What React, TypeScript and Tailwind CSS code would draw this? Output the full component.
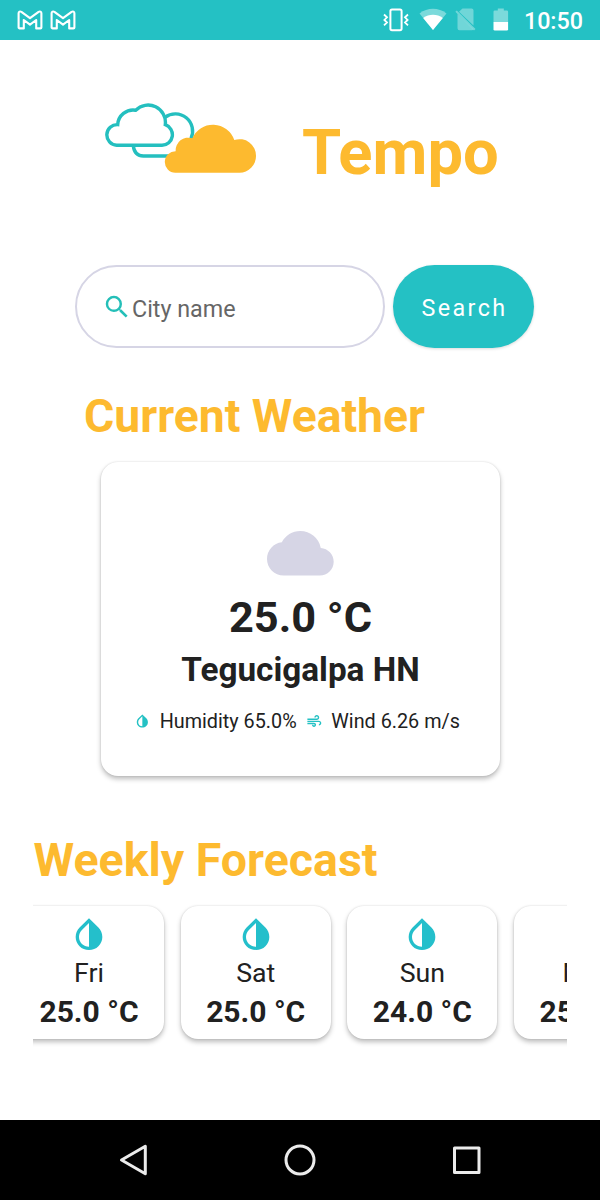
import type { ReactNode } from "react";
import { MdAir, MdCloud, MdInvertColors, MdSearch } from "react-icons/md";

interface Day {
  name: string;
  temp: string;
}

const days: Day[] = [
  { name: "Fri", temp: "25.0 °C" },
  { name: "Sat", temp: "25.0 °C" },
  { name: "Sun", temp: "24.0 °C" },
  { name: "Mon", temp: "25.0 °C" },
];

function MailGlyph() {
  return (
    <svg width="26" height="20" viewBox="0 0 26 20" fill="none" stroke="white" strokeWidth="2.1" strokeLinejoin="round">
      <path d="M1.600 3.200C1.600 1.600 3 1 4.400 1.800L13 8.200l8.600-6.400c1.400-.8 2.800-.2 2.800 1.400V17.400a1 1 0 0 1-1 1h-4.200V10L13 14.600 6.800 10v8.400H2.600a1 1 0 0 1-1-1z" />
    </svg>
  );
}

function VibrateGlyph() {
  return (
    <svg width="26" height="24" viewBox="0 0 26 24" fill="none" stroke="white" strokeWidth="2">
      <rect x="7.4" y="1.6" width="11.2" height="20.6" rx="1.6" />
      <path d="M1 6.500l3 2.800-2.600 2.600L4 14.500l-3 2.800M25 6.500l-3 2.800 2.600 2.600-2.600 2.600 3 2.800" strokeWidth="1.8" />
    </svg>
  );
}

function WifiGlyph() {
  return (
    <svg width="28" height="24" viewBox="0 0 28 24" fill="white">
      <path d="M.5 5.500C8.500-.7 19.500-.7 27.500 5.500L14 22z" fillOpacity=".4" />
      <path d="M4.200 10.100C10 5.700 18 5.700 23.800 10.100L14 22z" />
    </svg>
  );
}

function NoSimGlyph() {
  return (
    <svg width="21" height="24" viewBox="0 0 21 24" fill="white" fillOpacity=".35">
      <path d="M7.500 .5H16.500a2 2 0 0 1 2 2V17.500L4 3.800zM2.500 6L18.500 21.500c-.3.500-.8.700-1.500.7H4.500a2 2 0 0 1-2-2z" />
      <path d="M.3 3.800L1.800 2.400 20.500 21 19 22.500z" />
    </svg>
  );
}

function BatteryGlyph() {
  return (
    <svg width="16" height="24" viewBox="0 0 16 24" fill="white">
      <path d="M1.800 2.500H4.800V0.500h6V2.500h3a1.300 1.300 0 0 1 1.300 1.300V14H.5V3.800a1.300 1.300 0 0 1 1.300-1.300z" fillOpacity=".4" />
      <path d="M.5 14H15.100v7.200a1.300 1.300 0 0 1-1.300 1.300h-12A1.300 1.300 0 0 1 .5 21.200z" />
    </svg>
  );
}

function Logo() {
  return (
    <svg width="152" height="71" viewBox="0 0 152 71" fill="none" stroke="#24bfbf" strokeWidth="3.400">
      <path d="M60 14.300A17.300 17.300 0 0 1 86 35.500M28.300 43c.8 6 4.200 10 10 10H64" />
      <path
        fill="white"
        d="M11.700 42.300A10.300 10.300 0 0 1 12.700 21.600A15.500 15.500 0 0 1 30.700 7.200A17.400 17.400 0 0 1 60.300 21.700A10.600 10.600 0 0 1 57 42.300z"
      />
      <path
        fill="#fdba2f"
        stroke="none"
        d="M70.300 69.700A10.600 10.600 0 0 1 70.700 48.300A12.600 12.600 0 0 1 87.300 35.300A22.500 22.500 0 0 1 129.300 37A16.500 16.500 0 0 1 151 53.200A16.500 16.500 0 0 1 134.500 69.700z"
      />
    </svg>
  );
}

function StatusBar() {
  return (
    <div className="flex h-10 items-center bg-[#24c1c4] px-[17px] text-white">
      <div className="flex gap-[7px]">
        <MailGlyph />
        <MailGlyph />
      </div>
      <div className="ml-auto flex items-center">
        <VibrateGlyph />
        <span className="ml-[10px]"><WifiGlyph /></span>
        <span className="ml-[8px]"><NoSimGlyph /></span>
        <span className="ml-[17px]"><BatteryGlyph /></span>
        <span className="mt-0.5 ml-[15px] text-[23.300px] leading-6 font-medium">10:50</span>
      </div>
    </div>
  );
}

function Stat({ icon, children }: { icon: ReactNode; children: ReactNode }) {
  return (
    <div className="flex items-center gap-[9px] whitespace-nowrap">
      <span className="text-[16.700px] text-[#24c1c4]">{icon}</span>
      <span>{children}</span>
    </div>
  );
}

function DayCard({ day }: { day: Day }) {
  return (
    <div className="flex h-[133px] w-[150px] shrink-0 flex-col items-center rounded-[17px] bg-white pt-[9px] shadow-[0_3px_5px_rgba(0,0,0,0.26),0_0_2px_rgba(0,0,0,0.14)]">
      <MdInvertColors className="text-[40px] text-[#24bfcb]" />
      <div className="text-[26.700px] leading-[37px]">{day.name}</div>
      <div className="text-[30px] leading-[40px] font-bold">{day.temp}</div>
    </div>
  );
}

export default function App() {
  return (
    <div className="flex h-[1200px] w-[600px] flex-col overflow-hidden bg-white font-['Roboto',sans-serif] text-[#212121]">
      <StatusBar />

      <header className="mt-[63px] flex h-[71px] items-center pl-[105px]">
        <Logo />
        <h1 className="mt-[26px] ml-[45px] text-[63.300px] leading-[96px] font-bold text-[#fdba2f]">Tempo</h1>
      </header>

      <div className="mt-[91px] flex gap-[8px] pl-[75px]">
        <div className="flex h-[83px] w-[310px] items-center rounded-full border-2 border-[#d6d5e5] pl-[25px]">
          <MdSearch className="text-[30px] text-[#24bfb8]" />
          <span className="mt-1.5 text-[23.300px] text-[#666666]">City name</span>
        </div>
        <button
          type="button"
          className="h-[83px] w-[141px] rounded-full bg-[#24c1c4] pt-1 pl-[2px] text-[23.300px] tracking-[2.400px] text-white shadow-[0_1px_3px_rgba(0,0,0,0.15)]"
        >
          Search
        </button>
      </div>

      <h2 className="mt-[37px] pl-[84px] text-[46.300px] leading-[62px] font-bold text-[#fdba2f]">Current Weather</h2>

      <section className="mt-[15px] ml-[101px] flex h-[314px] w-[399px] shrink-0 flex-col items-center rounded-[17px] bg-white pt-[58px] shadow-[0_3px_5px_rgba(0,0,0,0.26),0_0_2px_rgba(0,0,0,0.14)]">
        <MdCloud className="text-[66.700px] text-[#d6d5e5]" />
        <div className="mt-[3px] text-[43.300px] leading-[56px] font-bold">25.0 °C</div>
        <div className="text-[33.300px] leading-[48px] font-bold">Tegucigalpa HN</div>
        <div className="mt-[16px] flex gap-[9px] self-stretch pl-[33px] text-[19.800px] leading-6">
          <Stat icon={<MdInvertColors />}>Humidity 65.0%</Stat>
          <Stat icon={<MdAir />}>Wind 6.26 m/s</Stat>
        </div>
      </section>

      <h2 className="mt-[53px] pl-[33.500px] text-[46.500px] leading-[62px] font-bold text-[#fdba2f]">Weekly Forecast</h2>

      {/* scrolled partway, so both edge cards are cut off */}
      <div className="mx-[33px] mt-[10px] h-[150px] overflow-hidden pt-[5px]">
        <div className="-ml-[19px] flex gap-[16.700px]">
          {days.map((d) => (
            <DayCard key={d.name} day={d} />
          ))}
        </div>
      </div>

      <nav className="mt-auto flex h-20 items-center bg-black">
        <svg width="600" height="80" viewBox="0 0 600 80" fill="none" stroke="#ebebeb" strokeWidth="3" strokeLinejoin="round">
          <path d="M121.500 40L145.300 26.200V53.800z" />
          <circle cx="300" cy="40" r="14" />
          <rect x="454.500" y="28" width="24.500" height="24.500" />
        </svg>
      </nav>
    </div>
  );
}
